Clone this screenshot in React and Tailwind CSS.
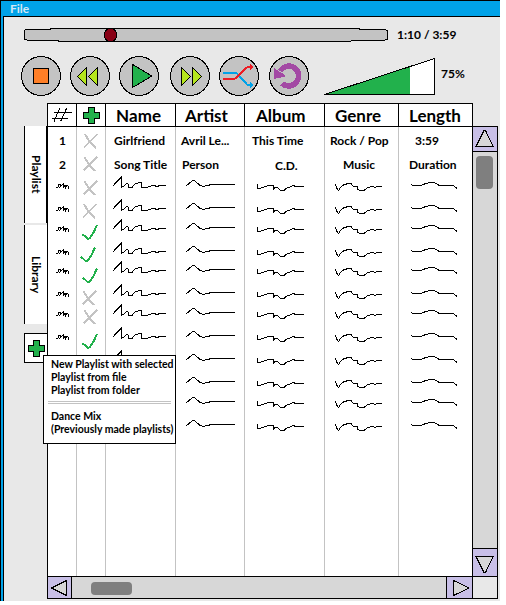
import React from "react";

const ROWS = [23, 20, 23, 19, 23, 20, 23, 23, 23, 20, 23, 24];

const MARKS = [
  ["x", 90, 13], ["x", 89.5, 13], ["v", 90, 13.5], ["v", 88, 13], ["v", 90, 15],
  ["x", 89, 15], ["x", 90, 14], ["v", 90, 14.5], ["v", 90, 14],
];

const SCRIBBLES = {
  num: "56,187 58,187 59,184 61,184 60,187 63.5,184 63.5,187.5 65,185 65.5,188 67,185 68,186 68,188.5 69,188.5",
  name: "113,186 116,182.5 121.5,177 121.5,187.5 124,186 126.5,183.5 128,184 128.5,187 132,187.5 135,184 141,182 141.5,187.5 146,187.5 151,186 154,185.5 157,186.5 160,185.5 166,185.5",
  artist: "186,186 189,183.5 192.5,180.5 194.5,180.5 199.5,185 203.5,186.5 205,186 209,185.5 210,184.5 235,184.5",
  album: "257.5,184 257.5,188.5 260.5,188.5 262,187.5 266,186.5 268,185.5 273.5,185.5 273.5,189.5 275,187.5 277.5,187.5 280.5,190.5 284,190.5 286,188.5 290,187 293.5,185.5 295.5,186.5 304,186.5",
  genre: "335.5,184 336.5,188 338.5,190.5 340.5,187.5 344,184.5 349,183.5 351.5,183.5 352.5,186 357.5,186.5 358,189.5 360,190.5 364,190.5 367.5,187.5 372.5,186.5 375,187.5 377.5,186.5 382,186.5",
  length: "411,184.5 413.5,185.5 420.5,185.5 424.5,184 430,182.5 433.5,182.5 438,184.5 438.5,185.5 453.5,185.5 457,188.5",
};

const COLUMNS = [
  { id: "num", left: 48, w: "w-[29px]", head: "", a: "1", b: "2", ap: "pl-[11px]", bp: "pl-[11px]" },
  { id: "mark", left: 77, w: "w-[29px]" },
  { id: "name", left: 106, w: "w-[70px]", head: "Name", hp: "pl-[10px] tracking-[0.1px]", a: "Girlfriend", b: "Song Title", ap: "pl-[8px]", bp: "pl-[8px]" },
  { id: "artist", left: 176, w: "w-[69px]", head: "Artist", hp: "pl-[9px]", a: "Avril Le...", b: "Person", ap: "pl-[5px]", bp: "pl-[6px]" },
  { id: "album", left: 245, w: "w-[80px]", head: "Album", hp: "pl-[11px]", a: "This Time", b: "C.D.", ap: "pl-[7px]", bp: "pl-[30px] pt-[2px]" },
  { id: "genre", left: 325, w: "w-[74px]", head: "Genre", hp: "pl-[10px]", a: "Rock / Pop", b: "Music", ap: "pl-[5px]", bp: "pl-[18px]" },
  { id: "length", left: 399, w: "w-[74px]", head: "Length", hp: "pl-[10px]", a: "3:59", b: "Duration", ap: "pl-[16px]", bp: "pl-[10px]" },
];

function Plus() {
  return (
    <svg width="17" height="17" viewBox="0 0 17 17" shapeRendering="crispEdges" className="block shrink-0">
      <path d="M5.5 .5h6v5h5v6h-5v5h-6v-5h-5v-6h5z" fill="#22b14c" stroke="#000" />
    </svg>
  );
}

function Mark({ kind, x, y, left }) {
  return (
    <svg width="28" height="20" className="block overflow-visible" shapeRendering="crispEdges">
      <g transform={`translate(${x - left} ${y})`} fill="none" strokeWidth="2">
        {kind === "x" ? (
          <path d="M-5.5-7Q-1 2 5.5 7M7-7Q1-1-6.5 6.5" stroke="#c3c3c3" />
        ) : (
          <path d="M-7.5 3l2.5 1.5L-2 7.5 0 6.5 3.5 1 7-6.5" stroke="#22b14c" />
        )}
      </g>
    </svg>
  );
}

function Column({ col }) {
  const isMark = col.id === "mark";
  return (
    <div className={`flex shrink-0 flex-col ${col.w}`}>
      <div className={`flex h-[24px] shrink-0 items-center border-y border-l border-black text-[17px] leading-none ${col.hp || ""}`}>
        {col.id === "num" && (
          <svg width="28" height="22" fill="none" stroke="#000" shapeRendering="crispEdges">
            <path d="M5.5 8.5H23.5M3.5 14.5H20M11.5 4.5L6 17.5M18.5 4.5L12.5 17.5" />
          </svg>
        )}
        {isMark && <div className="pl-[6px]"><Plus /></div>}
        {col.head}
      </div>
      <div className={`flex h-[449px] flex-col border-l ${col.id === "num" ? "border-black" : "border-[#c3c3c3]"}`}>
        <div className={`flex h-[28px] shrink-0 items-center ${col.ap || ""}`}>
          {isMark ? <Mark kind="x" x={90.5} y={10} left={col.left} /> : col.a}
        </div>
        <div className={`flex h-[20px] shrink-0 items-center ${col.bp || ""}`}>
          {isMark ? <Mark kind="x" x={90} y={9} left={col.left} /> : col.b}
        </div>
        {ROWS.map((h, i) => (
          <div key={i} className="shrink-0" style={{ height: h }}>
            {isMark
              ? MARKS[i] && <Mark kind={MARKS[i][0]} x={MARKS[i][1]} y={MARKS[i][2]} left={col.left} />
              : (
                <svg width="28" height="18" className="block overflow-visible" shapeRendering="crispEdges">
                  <polyline points={SCRIBBLES[col.id]} transform={`translate(${-col.left} -175)`} fill="none" stroke="#000" />
                </svg>
              )}
          </div>
        ))}
      </div>
    </div>
  );
}

function RoundButton({ children, cx }) {
  return (
    <svg width="40" height="40" viewBox={`${cx - 20} 56 40 40`} className="block shrink-0" shapeRendering="crispEdges">
      <circle cx={cx} cy="76" r="19.5" fill="#c3c3c3" stroke="#000" />
      {children}
    </svg>
  );
}

function ScrollArrow({ d, className }) {
  return (
    <div className={`flex shrink-0 bg-[#c8bfe7] border-black ${className}`}>
      <svg width="24" height="24" className="block overflow-visible" shapeRendering="crispEdges">
        <path d={d} fill="#d7d7d7" stroke="#000" />
      </svg>
    </div>
  );
}

export default function App() {
  return (
    <div className="h-[605px] w-[506px] overflow-hidden bg-white font-['Lato','Liberation_Sans',sans-serif] text-[12px] leading-none font-bold whitespace-nowrap text-black">
      <div className="relative flex h-[601px] w-[500px] flex-col border-t border-l border-black bg-[#00a2e8]">
        <div className="flex h-[15px] shrink-0 items-center pl-[9px] text-[12px] text-[#d5e8f5]">File</div>
        <div className="ml-[2px] flex grow flex-col border-t border-l border-black bg-[#e8e8e8]">
          <div className="flex h-[36px] items-center pl-[20px]">
            <svg width="364" height="15" viewBox="24 28 364 15" className="block" shapeRendering="crispEdges">
              <path d="M24.5 30.5L26 29.5H50L51 28.5H359L360 29.5H385L387.5 30.5V39.5L383 40.5H352L350 41.5H59L58 40.5H30L24.5 39.5Z" fill="#c3c3c3" stroke="#000" />
              <circle cx="110.5" cy="35" r="6.5" fill="#880015" stroke="#000" />
            </svg>
            <div className="pl-[9px] text-[12px]">1:10 / 3:59</div>
          </div>
          <div className="flex h-[50px] items-start pt-[3px] pl-[17px]">
            <div className="flex gap-[9px]">
              <RoundButton cx={41}><rect x="33.5" y="68.5" width="15" height="15" fill="#ff7f27" stroke="#000" /></RoundButton>
              <RoundButton cx={90}><path d="M77.5 76.5L86.5 67.5V85.5ZM88.5 76.5L97.5 67.5V85.5Z" fill="#b5e61d" stroke="#000" /></RoundButton>
              <RoundButton cx={139}><path d="M132.5 64.5V87.5L152 76Z" fill="#22b14c" stroke="#000" /></RoundButton>
              <div className="ml-[2px] flex gap-[9px]">
                <RoundButton cx={190}><path d="M181.5 67.5V85.5L190.5 76.5ZM192.5 67.5V85.5L201.5 76.5Z" fill="#b5e61d" stroke="#000" /></RoundButton>
                <RoundButton cx={239}>
                  <path d="M223 73H236.5L247.5 85H251" fill="none" stroke="#00a2e8" strokeWidth="2" />
                  <path d="M250 82L254 85L250 88Z" fill="#00a2e8" />
                  <path d="M223 79H234.5L247.5 67H251" fill="none" stroke="#ed1c24" strokeWidth="2" />
                  <path d="M250 64L254 67L250 70Z" fill="#ed1c24" />
                </RoundButton>
              </div>
              <div className="ml-px">
                <RoundButton cx={289}>
                  <path d="M280 71Q284 66 289 66A10 10 0 1 1 282 83.5" fill="none" stroke="#a349a4" strokeWidth="5.5" />
                  <path d="M274 68V79L285 76.5V75Z" fill="#a349a4" />
                </RoundButton>
              </div>
            </div>
            <svg width="112" height="38" viewBox="324 58 112 38" className="ml-[15px] mt-[2px] block" shapeRendering="crispEdges">
              <path d="M324.5 94.5H434.5V58.5Z" fill="#fff" />
              <path d="M324.5 94.5H410V66.5Z" fill="#22b14c" />
              <path d="M324.5 94.5H434.5V58.5Z" fill="none" stroke="#000" />
            </svg>
            <div className="pt-[12px] pl-[5px] text-[12px]">75%</div>
          </div>
          <div className="flex items-start pl-[20px]">
            <div className="relative z-10 mt-[23px] flex w-[23px] shrink-0 flex-col">
              <div className="flex h-[97px] items-center justify-center border-y border-l border-black bg-white text-[12px] [writing-mode:vertical-rl]">Playlist</div>
              <div className="mt-[2px] flex h-[99px] w-[24px] items-center justify-center border-y border-l border-black bg-white text-[12px] [writing-mode:vertical-rl]">Library</div>
              <div className="mt-[9px] flex h-[30px] items-center border-y border-l border-black bg-white pl-[3px]"><Plus /></div>
            </div>
            <div className="flex w-[426px] shrink-0 flex-col border-r border-black bg-white">
              <div className="flex h-[473px]">
                {COLUMNS.map((c, i) => <Column key={i} col={c} />)}
              </div>
              <div className="flex h-[23px] border-y border-l border-black bg-[#d7d7d7]">
                <ScrollArrow className="w-[24px] border-r" d="M3.5 11L18.5 3.5V18.5Z" />
                <div className="mt-[5px] ml-[19px] h-[13px] w-[41px] rounded-[4px] bg-[#7f7f7f]" />
                <ScrollArrow className="ml-auto w-[26px] border-l" d="M6.5 3.5V18.5L22 11Z" />
              </div>
            </div>
            <div className="mt-[23px] flex h-[473px] w-[25px] flex-col border-y border-r border-black bg-[#d7d7d7]">
              <ScrollArrow className="h-[25px] border-b" d="M3 19.5H20L12.5 3.5H11Z" />
              <div className="mt-[4px] ml-[3px] h-[33px] w-[17px] rounded-[4px] bg-[#7f7f7f]" />
              <ScrollArrow className="mt-auto h-[29px] border-y" d="M3 7.5H20L12.5 23.5H11Z" />
              <div className="h-[21px] shrink-0 bg-[#e8e8e8]" />
            </div>
          </div>
        </div>
        <div className="absolute top-[354px] left-[42px] z-20 flex h-[89px] w-[133px] flex-col border border-black bg-white pt-[2px] pl-[7px] text-[10.5px] leading-[13px]">
          <div>New Playlist with selected</div>
          <div>Playlist from file</div>
          <div>Playlist from folder</div>
          <div className="mt-[4px] -ml-[3px] h-[3px] w-[123px] border-y border-[#c3c3c3]" />
          <div className="mt-[6px]">Dance Mix</div>
          <div>(Previously made playlists)</div>
        </div>
      </div>
    </div>
  );
}
